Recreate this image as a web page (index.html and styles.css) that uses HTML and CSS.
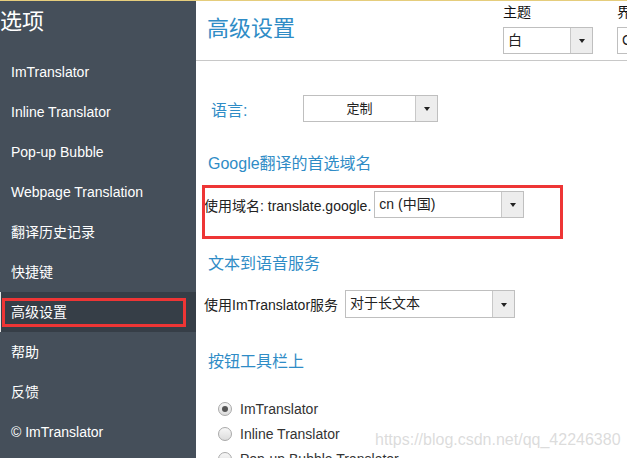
FILE: index.html
```html
<!DOCTYPE html>
<html lang="zh-CN">
<head>
    <meta charset="UTF-8">
    <meta name="viewport" content="width=device-width, initial-scale=1.0">
    <title>选项 - 高级设置</title>
    <link rel="stylesheet" href="styles.css">
</head>
<body>
    <div class="page">
        <aside class="sidebar">
            <div class="brand">选项</div>
            <ul class="nav">
                <li>ImTranslator</li>
                <li>Inline Translator</li>
                <li>Pop-up Bubble</li>
                <li>Webpage Translation</li>
                <li>翻译历史记录</li>
                <li>快捷键</li>
                <li class="active">高级设置<span class="mark mark-nav"></span></li>
                <li>帮助</li>
                <li>反馈</li>
                <li>© ImTranslator</li>
            </ul>
        </aside>

        <main class="main">
            <header class="topbar">
                <h1>高级设置</h1>
                <div class="pick">
                    <label>主题</label>
                    <div class="select theme-select"><span class="val">白</span><span class="arrow"></span></div>
                </div>
                <div class="pick">
                    <label>界面语言</label>
                    <div class="select ui-select"><span class="val">Chinese (Simplified)</span><span class="arrow"></span></div>
                </div>
            </header>

            <section class="content">
                <div class="row lang-row">
                    <span class="lang-label">语言:</span>
                    <div class="select lang-select"><span class="val center">定制</span><span class="arrow"></span></div>
                </div>

                <h2 class="heading h-google">Google翻译的首选域名</h2>
                <div class="row domain-row">
                    <span>使用域名: translate.google.</span>
                    <div class="select domain-select"><span class="val">cn (中国)</span><span class="arrow"></span></div>
                    <span class="mark mark-domain"></span>
                </div>

                <h2 class="heading h-tts">文本到语音服务</h2>
                <div class="row service-row">
                    <span>使用ImTranslator服务</span>
                    <div class="select service-select"><span class="val">对于长文本</span><span class="arrow"></span></div>
                </div>

                <h2 class="heading h-toolbar">按钮工具栏上</h2>
                <div class="radios">
                    <div class="radio checked"><span class="dot"></span>ImTranslator</div>
                    <div class="radio"><span class="dot"></span>Inline Translator</div>
                    <div class="radio"><span class="dot"></span>Pop-up Bubble Translator</div>
                </div>
            </section>

            <div class="watermark">https://blog.csdn.net/qq_42246380</div>
        </main>
    </div>
</body>
</html>
```

FILE: styles.css
```css
body {
    margin: 0;
    width: 627px;
    height: 458px;
    overflow: hidden;
    border-top: 1px solid #e5cd7c;
    font-family: "Liberation Sans", "Noto Sans CJK SC", sans-serif;
    background: #fff;
}
.page {
    display: flex;
    height: 457px;
}
.sidebar {
    flex: 0 0 196px;
    background: #454f5a;
    color: #fff;
}
.brand {
    height: 51px;
    line-height: 42px;
    font-size: 22px;
    padding-left: 0;
}
.nav {
    list-style: none;
    margin: 0;
    padding: 0;
}
.nav li {
    height: 40px;
    line-height: 41px;
    padding-left: 11px;
    font-size: 14px;
    position: relative;
}
.nav li.active {
    background: #363e47;
    box-shadow: inset 1px 0 0 #e6e6e6;
}
.mark {
    position: absolute;
    border: 3px solid #ee3535;
    box-sizing: border-box;
}
.mark-nav {
    left: 2px;
    top: 6px;
    width: 184px;
    height: 29px;
}
.main {
    flex: 1;
    position: relative;
    overflow: hidden;
}
.topbar {
    display: flex;
    height: 59px;
    border-bottom: 1px solid #c8c8c8;
}
.topbar h1 {
    flex: 0 0 307px;
    margin: 0;
    padding: 16px 0 0 11px;
    font-size: 22px;
    line-height: 24px;
    font-weight: normal;
    color: #2f8cc6;
    box-sizing: border-box;
}
.pick {
    flex: 0 0 auto;
    margin-right: 24px;
    padding-top: 2px;
}
.pick label {
    display: block;
    font-size: 14px;
    line-height: 18px;
    height: 18px;
    color: #111;
    margin-bottom: 6px;
}
.select {
    display: flex;
    height: 27px;
    border: 1px solid #bfbfbf;
    box-sizing: border-box;
    background: #fff;
    font-size: 14px;
    color: #222;
}
.select .val {
    flex: 1;
    padding-left: 4px;
    line-height: 25px;
    white-space: nowrap;
    overflow: hidden;
}
.select .val.center {
    text-align: center;
    padding-left: 0;
    font-size: 13px;
}
.select .arrow {
    flex: 0 0 21px;
    border-left: 1px solid #c8c8c8;
    background: #ededed;
    display: flex;
    align-items: center;
    justify-content: center;
}
.select .arrow::after {
    content: "";
    display: block;
    margin-top: 1px;
    border-left: 3px solid transparent;
    border-right: 3px solid transparent;
    border-top: 4px solid #222;
}
.theme-select { width: 90px; }
.ui-select { width: 140px; }
.lang-select { width: 135px; }
.domain-select { width: 150px; margin-left: 3px; }
.service-select { width: 170px; height: 28px; margin-left: 7px; }
.content {
    padding-left: 8px;
    font-size: 14px;
    color: #222;
}
.row {
    display: flex;
    align-items: center;
    position: relative;
}
.lang-row {
    margin-top: 34px;
    padding-left: 7px;
}
.lang-label {
    flex: 0 0 92px;
    font-size: 16px;
    color: #2f8cc6;
}
.heading {
    margin: 0;
    padding-left: 4px;
    font-size: 16px;
    line-height: 20px;
    font-weight: normal;
    color: #2f8cc6;
}
.h-google { margin-top: 32px; }
.domain-row { margin-top: 17px; }
.mark-domain {
    left: -2px;
    top: -6px;
    width: 361px;
    height: 54px;
}
.h-tts { margin-top: 36px; }
.service-row { margin-top: 16px; }
.h-toolbar { margin-top: 34px; }
.radios {
    margin-top: 24px;
    padding-left: 14px;
}
.radio {
    display: flex;
    align-items: center;
    height: 25px;
    color: #333;
}
.dot {
    width: 14px;
    height: 14px;
    border-radius: 50%;
    border: 1px solid #a9a9a9;
    box-sizing: border-box;
    background: linear-gradient(#f7f7f7, #dcdcdc);
    margin-right: 8px;
    display: flex;
    align-items: center;
    justify-content: center;
}
.radio.checked .dot::after {
    content: "";
    width: 6px;
    height: 6px;
    border-radius: 50%;
    background: #555;
}
.watermark {
    position: absolute;
    left: 179px;
    top: 430px;
    font-size: 16px;
    color: rgba(190, 190, 190, 0.55);
    white-space: nowrap;
}
```
